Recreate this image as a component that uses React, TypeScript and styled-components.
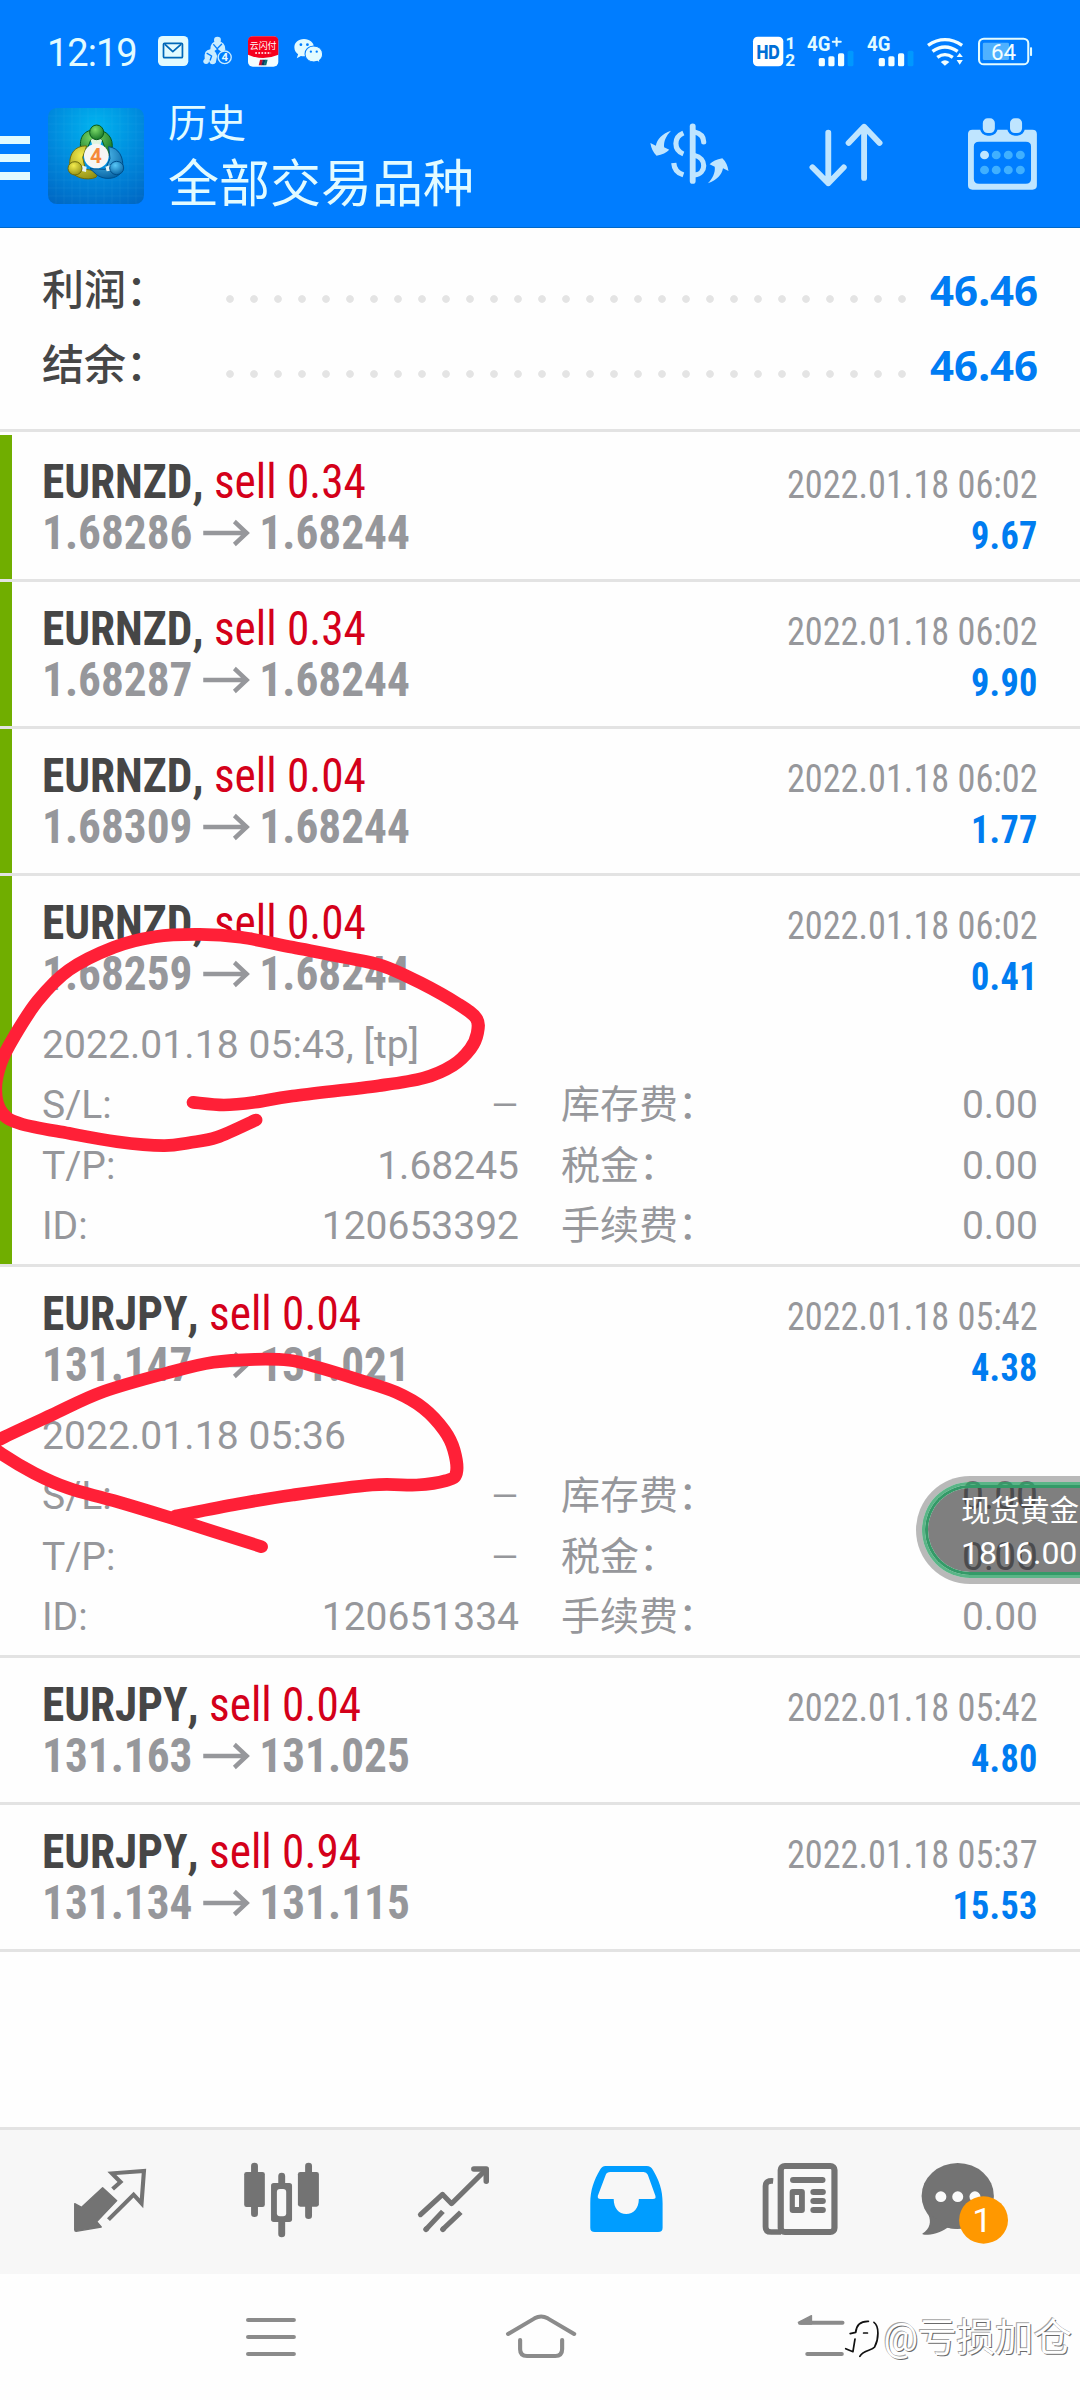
import React from 'react';
import styled, { createGlobalStyle } from 'styled-components';

const GlobalStyle = createGlobalStyle`
  html, body { margin: 0; padding: 0; background: #fefefe; }
  *, *::before, *::after { box-sizing: border-box; }
  svg { display: block; flex: none; overflow: visible; }
`;

const SANS = `Roboto, "Noto Sans CJK SC", sans-serif`;
const COND = `"Roboto Condensed", Roboto, "Noto Sans CJK SC", sans-serif`;
const BLUE = '#007dff';
const ICE = '#e2fbff';
const PALE = '#bfe5ff';
const GREY = '#96979b';
const DARK = '#737373';
const RULE = '#e3e3e3';

/* ---------- drawing helper: artwork units are about a third of a pixel ---------- */
type BoxProps = { box: [number, number, number, number]; children: React.ReactNode };
const Art = ({ box, children }: BoxProps) => (
  <svg
    viewBox={box.join(' ')}
    width={box[2] / 2.9037}
    height={box[3] / 3}
    preserveAspectRatio="none"
    fill="none"
    strokeLinecap="round"
    strokeLinejoin="round"
  >
    {children}
  </svg>
);

/* ---------- page ---------- */
const Screen = styled.main`
  position: relative;
  display: flex;
  flex-direction: column;
  width: 1080px;
  height: 2400px;
  overflow: hidden;
  background: #fefefe;
  font-family: ${SANS};
`;

/* ---------- header ---------- */
const Header = styled.header`
  height: 228px;
  background: ${BLUE};
  color: ${ICE};
  border-bottom: 1px solid #0068c8;
`;
const StatusBar = styled.div`
  display: flex;
  align-items: center;
  justify-content: space-between;
  height: 102px;
  padding: 0 48px 0 47px;
`;
const StatusGroup = styled.div<{ $gap: number }>`
  display: flex;
  align-items: center;
  gap: ${(p) => p.$gap}px;
`;
const Clock = styled.span`
  width: 95px;
  margin-top: 4px;
  font-size: 38px;
  line-height: 44px;
  letter-spacing: -1px;
`;
const Toolbar = styled.div`
  display: flex;
  align-items: flex-start;
`;
const MenuButton = styled.div`
  display: flex;
  flex-direction: column;
  gap: 10px;
  width: 30px;
  margin: 34px 18px 0 0;
`;
const MenuBar = styled.span`
  height: 8px;
  background: ${ICE};
`;
const LogoBox = styled.div`
  margin: 6px 24px 0 0;
`;
const Titles = styled.div`
  flex: 1;
  font-weight: 400;
`;
const Kicker = styled.div`
  font-size: 39px;
  line-height: 44px;
`;
const Title = styled.div`
  margin-top: 7px;
  font-size: 51px;
  line-height: 64px;
`;
const Actions = styled.div`
  display: flex;
  gap: 80px;
  margin: 16px 43px 0 0;
`;
const CalendarSlot = styled.div`
  margin-left: 5px;
`;

/* ---------- summary ---------- */
const Summary = styled.section`
  height: 204px;
  padding: 25px 42px 0;
  border-bottom: 3px solid ${RULE};
`;
const SummaryRow = styled.div`
  display: flex;
  align-items: center;
  height: 75px;
  font-size: 42px;
  line-height: 75px;
`;
const SummaryLabel = styled.span`
  width: 176px;
  font-weight: 500;
  color: #464646;
`;
const Dots = styled.span`
  flex: none;
  width: 696px;
  height: 12px;
  margin-top: 17px;
  background: radial-gradient(circle at 12px 6px, #e4e4e4 3.4px, transparent 4.2px) 0 0 / 24px 12px;
`;
const SummaryValue = styled.span`
  flex: 1;
  padding-bottom: 2px;
  line-height: 73px;
  text-align: right;
  font-family: "Noto Sans", sans-serif;
  font-weight: 700;
  color: #007cf3;
`;

/* ---------- deals ---------- */
const DealList = styled.section`
  flex: 1;
  padding-top: 3px;
`;
const Deal = styled.article<{ $marked: boolean; $open: boolean }>`
  height: ${(p) => (p.$open ? 391 : 147)}px;
  padding: 21px 42px 0;
  box-shadow: inset 12px 0 ${(p) => (p.$marked ? '#70ae00' : 'transparent')};
  border-bottom: 3px solid ${RULE};
`;
const DealHead = styled.div`
  display: flex;
  justify-content: space-between;
  font-family: ${COND};
  line-height: 51px;
  white-space: nowrap;
  font-kerning: none;
`;
const DealLeft = styled.div`
  font-size: 48px;
  transform: scaleX(0.943);
  transform-origin: left;
`;
const DealRight = styled.div`
  padding-top: 4px;
  font-size: 39px;
  text-align: right;
  transform: scaleX(0.93);
  transform-origin: right;
`;
const Symbol = styled.div`
  font-weight: 700;
  color: #464646;
`;
const Side = styled.span`
  font-weight: 400;
  color: #d4001a;
`;
const Prices = styled.div`
  display: flex;
  align-items: center;
  gap: 11px;
  font-weight: 700;
  color: ${GREY};
`;
const ClosedAt = styled.div`
  color: ${GREY};
`;
const Profit = styled.div`
  font-weight: 700;
  letter-spacing: 0.3px;
  color: #007cf0;
`;
const Details = styled.div`
  padding-top: 11.5px;
  font-size: 39px;
  line-height: 60.67px;
  color: ${GREY};
`;
const Opened = styled.div`
  letter-spacing: 0.08px;
`;
const DetailGrid = styled.div`
  display: grid;
  grid-template-columns: 1fr 1fr;
  column-gap: 42px;
`;
const Field = styled.div`
  display: flex;
  justify-content: space-between;
  height: 60.67px;
`;
const Dash = styled.span`
  padding-right: 1px;
  font-size: 34px;
`;

/* ---------- bottom bars ---------- */
const TabBar = styled.nav`
  display: flex;
  height: 147px;
  padding: 0 24px;
  background: #f7f7f7;
  border-top: 3px solid ${RULE};
`;
const SystemBar = styled.footer`
  display: flex;
  align-items: flex-start;
  height: 126px;
  padding: 38px 0 0 246px;
  background: #fefefe;
`;
const HomeSlot = styled.div`
  margin: 0 221px 0 210px;
`;

/* ---------- overlays ---------- */
const Marker = styled.div<{ $top: number }>`
  position: absolute;
  top: ${(p) => p.$top}px;
  left: 0;
`;
const Ticker = styled.aside`
  position: absolute;
  top: 1476px;
  left: 916px;
  width: 164px;
  height: 108px;
  border: 6px solid rgba(0, 0, 0, 0.27);
  border-right: 0;
  border-radius: 54px 0 0 54px;
`;
const TickerRing = styled.div`
  height: 96px;
  border: 3px solid rgba(20, 150, 85, 0.7);
  border-right: 0;
  border-radius: 48px 0 0 48px;
`;
const TickerBody = styled.div`
  height: 90px;
  padding: 4px 0 0 33px;
  border: 3px solid #349a68;
  border-right: 0;
  border-radius: 45px 0 0 45px;
  background: rgba(0, 0, 0, 0.5);
  background-clip: padding-box;
  color: #fff;
  white-space: nowrap;
`;
const TickerName = styled.div`
  font-size: 29.5px;
  line-height: 38px;
`;
const TickerPrice = styled.div`
  font-size: 32px;
  line-height: 47px;
`;
const Watermark = styled.div`
  position: absolute;
  right: 8px;
  top: 2312px;
  display: flex;
  align-items: center;
  gap: 3px;
  font-size: 38.5px;
  line-height: 52px;
  color: #fff;
  text-shadow: 1px 1px 0 #6a6a6a, -1px -1px 0 #a4a4a4;
`;

/* ---------- status icons ---------- */
const MailIcon = () => (
  <Art box={[459, 108, 88, 90]}>
    <rect x="459" y="108" width="88" height="90" rx="14" fill={ICE} />
    <rect x="475" y="130" width="55" height="43" rx="3" stroke="#0068b8" strokeWidth="5" />
    <path d="M480 134 L502 155 L525 134" stroke="#0068b8" strokeWidth="5" />
  </Art>
);
const MetaIcon = () => (
  <Art box={[591, 108, 84, 88]}>
    <g fill="#c9ecff">
      <circle cx="633" cy="120" r="10" />
      <path d="M612 150 Q612 124 633 124 Q656 124 656 150 L645 156 L633 146 L620 156Z" />
      <path d="M596 178 Q592 150 612 148 Q628 150 632 168 L628 188 L606 184Z" />
      <circle cx="600" cy="184" r="8" />
      <circle cx="619" cy="184" r="9" />
    </g>
    <path d="M622 134 L632 146 L645 133 M603 160 L616 168 L612 180" stroke={BLUE} strokeWidth="4" />
    <circle cx="654" cy="172" r="19" fill={BLUE} stroke="#c9ecff" strokeWidth="4" />
    <text x="654" y="184" textAnchor="middle" fontFamily={SANS} fontWeight="700" fontSize="33" fill="#e8faff">4</text>
  </Art>
);
const PayIcon = () => (
  <Art box={[720, 106, 88, 92]}>
    <rect x="720" y="107" width="88" height="91" rx="14" fill="#f4feff" />
    <path d="M720 121 Q720 107 734 107 H794 Q808 107 808 121 V162 Q764 182 720 162Z" fill="#f5001d" />
    <text x="764" y="146" textAnchor="middle" fontFamily={SANS} fontSize="26" fill="#fff">云闪付</text>
    <path d="M741 157 H787" stroke="#ffc9cf" strokeWidth="6" strokeDasharray="5 4" strokeLinecap="butt" />
    <path d="M755 177 H764 L760 194 H751Z" fill="#c8102e" />
    <path d="M763 177 H771 L767 194 H759Z" fill="#12355f" />
    <path d="M770 177 H777 L773 194 H766Z" fill="#0a6f72" />
  </Art>
);
const WeChatIcon = () => (
  <Art box={[853, 114, 84, 76]}>
    <path d="M882 117 C865 117 854 128 854 142 C854 152 859 158 865 163 L861 175 L873 168 Q884 170 892 167 C905 165 911 153 911 142 C911 128 899 117 882 117Z" fill={ICE} />
    <path d="M910 138 C895 138 885 149 885 162 C885 176 896 186 911 186 L921 184 L929 189 L927 181 C933 177 936 170 936 162 C936 148 925 138 910 138Z" fill={ICE} stroke={BLUE} strokeWidth="3" />
    <g fill={BLUE}>
      <circle cx="873" cy="134" r="4" />
      <circle cx="892" cy="134" r="4" />
      <circle cx="902" cy="155" r="3.4" />
      <circle cx="919" cy="155" r="3.4" />
    </g>
  </Art>
);
const HdIcon = () => (
  <Art box={[618, 106, 120, 92]}>
    <rect x="618" y="108" width="88" height="89" rx="14" fill="#fff" />
    <text x="662" y="174" textAnchor="middle" textLength="68" lengthAdjust="spacingAndGlyphs" fontFamily="Inter, sans-serif" fontWeight="800" fontSize="56" fill="#006fd6">HD</text>
    <text x="727" y="144" textAnchor="middle" fontFamily={SANS} fontWeight="700" fontSize="50" fill={ICE}>1</text>
    <text x="726" y="196" textAnchor="middle" fontFamily={SANS} fontWeight="700" fontSize="50" fill={ICE}>2</text>
  </Art>
);
const SignalIcon = ({ plus }: { plus?: boolean }) => (
  <Art box={[776, 106, 136, 92]}>
    <text x="776" y="152" textLength="68" lengthAdjust="spacingAndGlyphs" fontFamily={SANS} fontWeight="700" fontSize="58" fill={ICE}>4G</text>
    {plus && <path d="M851 123 H874 M862 112 V135" stroke={ICE} strokeWidth="6" />}
    <rect x="810" y="172" width="18" height="25" rx="5" fill="#f2feff" />
    <rect x="838" y="167" width="18" height="30" rx="5" fill="#f2feff" />
    <rect x="866" y="158" width="18" height="39" rx="5" fill="#f2feff" />
    <rect x="894" y="150" width="17" height="47" rx="5" fill="#0098ff" />
  </Art>
);
const WifiIcon = () => (
  <Art box={[1124, 108, 110, 90]}>
    <g stroke="#f2feff" strokeWidth="10" strokeLinecap="butt">
      <path d="M1127 136 Q1176 102 1226 136" />
      <path d="M1140 154 Q1176 128 1213 154" />
      <path d="M1154 172 Q1176 156 1199 172" />
    </g>
    <path d="M1164 186 Q1176 176 1189 186 L1176 197Z" fill="#f2feff" />
    <path d="M1210 171 L1219 159 L1228 171Z M1210 180 L1219 194 L1228 180Z" fill="#f2feff" />
  </Art>
);
const BatteryIcon = () => (
  <Art box={[1272, 114, 157, 86]}>
    <rect x="1275" y="119" width="143" height="77" rx="14" stroke={ICE} strokeWidth="6" />
    <rect x="1286" y="131" width="76" height="52" rx="4" fill="#4fb1ff" />
    <rect x="1423" y="145" width="6" height="26" rx="2" fill={ICE} />
    <text x="1346" y="183" textAnchor="middle" fontFamily={SANS} fontSize="65" fill="#f4feff">64</text>
  </Art>
);

/* ---------- header icons ---------- */
const Logo = () => (
  <svg width="96" height="96" viewBox="24 24 288 288">
    <defs>
      <radialGradient id="sky" cx="0.5" cy="0.2" r="0.9">
        <stop offset="0" stopColor="#00b4f0" />
        <stop offset="0.55" stopColor="#0088dc" />
        <stop offset="1" stopColor="#0068c4" />
      </radialGradient>
      <radialGradient id="green" cx="0.4" cy="0.3" r="0.8">
        <stop offset="0" stopColor="#7ddc6a" />
        <stop offset="1" stopColor="#0b6b20" />
      </radialGradient>
      <radialGradient id="yellow" cx="0.4" cy="0.3" r="0.8">
        <stop offset="0" stopColor="#f3ec4e" />
        <stop offset="1" stopColor="#8c8a10" />
      </radialGradient>
      <radialGradient id="azure" cx="0.4" cy="0.3" r="0.8">
        <stop offset="0" stopColor="#58c8f8" />
        <stop offset="1" stopColor="#005a9c" />
      </radialGradient>
    </defs>
    <rect x="24" y="24" width="288" height="288" rx="26" fill="url(#sky)" />
    <path
      d="M48 24V312M72 24V312M96 24V312M120 24V312M144 24V312M168 24V312M192 24V312M216 24V312M240 24V312M264 24V312M288 24V312M24 48H312M24 72H312M24 96H312M24 120H312M24 144H312M24 168H312M24 192H312M24 216H312M24 240H312M24 264H312M24 288H312"
      stroke="#7fd4ff"
      strokeOpacity="0.1"
      strokeWidth="2"
    />
    <g strokeWidth="3">
      <path d="M122 146 C116 102 142 88 168 90 C200 90 222 112 216 150 L204 168 L186 120 H152 L134 168Z" fill="url(#green)" stroke="#075a1c" />
      <path d="M140 138 C104 136 84 164 90 206 C96 232 140 244 168 232 L178 214 L136 208 L128 172Z" fill="url(#yellow)" stroke="#6d6c0c" />
      <path d="M206 140 C236 144 252 170 248 208 C240 236 196 244 170 224 L150 206 L196 208 L210 176Z" fill="url(#azure)" stroke="#00508c" />
      <path d="M152 120 L168 112 L186 120 L180 140 H158Z" fill="#dff5e0" />
      <path d="M122 196 L140 200 L138 216 L122 212Z M196 200 L214 194 L212 212 L200 214Z" fill="#e4f3f4" />
      <ellipse cx="170" cy="97" rx="21" ry="22" fill="url(#green)" stroke="#075a1c" />
      <ellipse cx="105" cy="205" rx="21" ry="20" fill="url(#yellow)" stroke="#6d6c0c" />
      <ellipse cx="230" cy="204" rx="21" ry="20" fill="url(#azure)" stroke="#00508c" />
    </g>
    <circle cx="169" cy="168" r="37" fill="#f6f6f4" />
    <text x="168" y="190" textAnchor="middle" fontFamily={SANS} fontWeight="700" fontSize="62" fill="#f5893a">4</text>
  </svg>
);
const SWAP_HEAD = 'M382 393 C355 403 342 418 338 438 L322 430 Q326 455 340 468 Q365 463 377 450 L362 443 C360 425 368 408 382 393Z';
const CurrencyIcon = () => (
  <Art box={[321, 355, 229, 217]}>
    <g stroke={PALE} strokeWidth="15">
      <path d="M445 380 V544" strokeWidth="17" />
      <path d="M450 397 C468 401 477 412 477 427" />
      <path d="M450 467 C486 475 486 522 450 526" />
      <g strokeLinecap="butt">
        <path d="M418 400 C389 412 389 452 418 463" />
        <path d="M390 490 C391 508 400 520 418 526" />
      </g>
    </g>
    <path d={SWAP_HEAD} fill={PALE} />
    <path d={SWAP_HEAD} fill={PALE} transform="rotate(180 435.5 472)" />
  </Art>
);
const SortIcon = () => (
  <Art box={[781, 355, 215, 217]}>
    <path d="M837 399 V551 M791 503 L837 551 L882 503 M941 535 V382 M896 430 L941 381 L986 430" stroke={PALE} strokeWidth="17" />
  </Art>
);
const CalendarIcon = () => (
  <Art box={[1243, 355, 200, 217]}>
    <path
      fillRule="evenodd"
      fill={PALE}
      d="M1256 390 H1430 Q1443 390 1443 403 V557 Q1443 570 1430 570 H1256 Q1243 570 1243 557 V403 Q1243 390 1256 390Z M1275 426 Q1260 426 1260 440 V538 Q1260 552 1275 552 H1411 Q1426 552 1426 538 V440 Q1426 426 1411 426Z"
    />
    <rect x="1282" y="352" width="43" height="52" rx="18" fill={PALE} stroke={BLUE} strokeWidth="8" />
    <rect x="1361" y="352" width="43" height="52" rx="18" fill={PALE} stroke={BLUE} strokeWidth="8" />
    {[466, 511].map((y) =>
      [1291, 1325, 1360, 1395].map((x) => (
        <circle key={`${x}-${y}`} cx={x} cy={y} r="13" fill={x === 1291 && y === 466 ? PALE : '#40b0ff'} />
      )),
    )}
  </Art>
);

/* ---------- tab icons, each filling its own cell ---------- */
const CELL = 499.4;
const QuotesTab = () => (
  <Art box={[69.7, 60, CELL, 431]}>
    <path d="M217 281 L237 292 L298 233 L339 272 L281 335 L294 351 L221 364 Q217 364 217 359Z" fill={DARK} stroke={DARK} strokeWidth="4" />
    <path d="M327 237 L350 216 L325 190 L418 183 L411 280 L388 254 L315 329" stroke={DARK} strokeWidth="12" strokeLinejoin="miter" strokeLinecap="butt" />
  </Art>
);
const ChartTab = () => (
  <Art box={[569.1, 60, CELL, 431]}>
    <path d="M739 168 V311 M896 168 V317 M818 198 V225 M818 330 V372" stroke={DARK} strokeWidth="20" />
    <rect x="709" y="186" width="60" height="105" rx="7" fill={DARK} />
    <rect x="865" y="186" width="61" height="104" rx="7" fill={DARK} />
    <rect x="787" y="219" width="61" height="117" rx="8" fill={DARK} />
    <rect x="804" y="237" width="27" height="82" rx="9" fill="#f7f7f7" />
  </Art>
);
const TradeTab = () => (
  <Art box={[1068.6, 60, CELL, 431]}>
    <g stroke={DARK} strokeWidth="15">
      <path d="M1221 314 L1285 253 L1311 281 L1410 180" />
      <path d="M1376 177 H1412 V214" strokeWidth="16" />
      <path d="M1237 358 L1286 304 M1286 358 L1338 307" strokeLinecap="butt" />
      <path d="M1237 358 L1238 357 M1286 358 L1287 357" strokeWidth="16" />
    </g>
  </Art>
);
const HistoryTab = () => (
  <Art box={[0, 60, CELL, 431]}>
    <path
      fill="#009dff"
      fillRule="evenodd"
      d="M190 168 H310 Q322 168 328 180 C345 210 356 238 356 280 V353 Q356 366 343 366 H159 Q146 366 146 353 V280 C146 240 157 210 174 180 Q180 168 190 168Z M204 186 Q194 186 191 194 L168 257 Q166 267 176 267 H214 C214 294 229 312 250 312 C272 312 287 294 287 267 H328 Q338 267 335 257 L313 194 Q309 186 301 186Z"
    />
  </Art>
);
const NewsTab = () => (
  <Art box={[CELL, 60, CELL, 431]}>
    <path d="M677 213 Q655 211 655 228 V350 Q655 366 671 366 H700" stroke={DARK} strokeWidth="17" strokeLinecap="butt" />
    <rect x="699" y="168" width="156" height="198" rx="12" stroke={DARK} strokeWidth="18" fill="#f9f9f9" />
    <path d="M735 210 H820 M794 246 H821 M794 273 H821 M794 300 H821" stroke={DARK} strokeWidth="18" />
    <rect x="725" y="237" width="44" height="72" rx="9" fill={DARK} />
    <rect x="740" y="255" width="12" height="36" fill="#f9f9f9" />
  </Art>
);
const ChatTab = () => (
  <Art box={[998.9, 60, CELL, 431]}>
    <ellipse cx="1213" cy="258" rx="105" ry="99" fill={DARK} />
    <path d="M1128 314 C1136 335 1134 355 1110 371 C1112 378 1155 374 1183 353 L1215 357Z" fill={DARK} />
    {[1164, 1213, 1263].map((x) => (
      <circle key={x} cx={x} cy="260" r="16" fill="#fafafa" />
    ))}
    <circle cx="1288" cy="330" r="71" fill="#ff9800" />
    <text x="1284" y="366" textAnchor="middle" fontFamily={SANS} fontSize="102" fill="#fff">1</text>
  </Art>
);

/* ---------- system navigation icons ---------- */
const NAV = '#8b8b8b';
const RecentsIcon = () => (
  <Art box={[714, 606, 145, 144]}>
    <path d="M720 630 H853 M720 681 H853 M720 732 H853" stroke={NAV} strokeWidth="12" />
  </Art>
);
const HomeIcon = () => (
  <Art box={[1469, 606, 204, 144]}>
    <path d="M1475 672 L1552 625 Q1571 614 1590 625 L1667 672 M1510 690 V718 Q1510 738 1530 738 H1612 Q1632 738 1632 718 V690" stroke={NAV} strokeWidth="12" />
  </Art>
);
const BackIcon = () => (
  <Art box={[748, 606, 150, 144]}>
    <path d="M760 638 H880 M778 732 H878" stroke={NAV} strokeWidth="12" />
    <path d="M752 637 L790 617 V642 H754Z" fill={NAV} stroke={NAV} strokeWidth="4" />
  </Art>
);
const WatermarkIcon = () => (
  <Art box={[875, 640, 105, 125]}>
    <path d="M888 728 L900 740 L904 712 L910 690 L897 688 L910 684 C914 664 924 656 944 658" stroke="#fff" strokeWidth="16" />
    <path d="M880 735 L901 744 L907 706 M893 690 L909 686 C911 664 924 652 946 653 M932 688 H943" stroke="#111" strokeWidth="5" />
    <path d="M962 656 C978 668 976 706 964 730 C955 742 932 738 921 758" stroke="#111" strokeWidth="5" />
  </Art>
);

/* ---------- hand-drawn marker strokes ---------- */
type Pt = [number, number];
const smooth = (p: Pt[]) =>
  p.slice(1).reduce((d, cur, i) => {
    const a = p[Math.max(i - 1, 0)];
    const b = p[i];
    const n = p[Math.min(i + 2, p.length - 1)];
    const c1 = [b[0] + (cur[0] - a[0]) / 6, b[1] + (cur[1] - a[1]) / 6];
    const c2 = [cur[0] - (n[0] - b[0]) / 6, cur[1] - (n[1] - b[1]) / 6];
    return `${d} C${c1.join(' ')} ${c2.join(' ')} ${cur.join(' ')}`;
  }, `M${p[0].join(' ')}`);

const UPPER: Pt[] = [
  [743, 780], [630, 832], [550, 848], [475, 857], [340, 845], [200, 820], [60, 791], [5, 757], [-13, 690], [2, 610], [40, 532],
  [110, 422], [200, 330], [330, 262], [450, 230], [580, 223], [700, 232], [850, 262], [1000, 292], [1110, 317], [1220, 368],
  [1330, 432], [1383, 475], [1386, 520], [1366, 566], [1315, 616], [1230, 654], [1100, 677], [850, 708], [740, 727], [650, 735], [561, 727],
];
const LOWER: Pt[] = [
  [759, 860], [500, 775], [330, 722], [200, 685], [100, 640], [5, 582], [-22, 556], [5, 535], [150, 465], [300, 395], [500, 335],
  [620, 307], [740, 298], [840, 301], [920, 321], [1050, 362], [1150, 397], [1230, 445], [1290, 511], [1318, 570], [1325, 640],
  [1295, 662], [1210, 675], [1080, 675], [850, 705], [690, 732], [510, 768],
];
const Stroke = ({ top, points }: { top: number; points: Pt[] }) => (
  <Marker $top={top}>
    <Art box={[0, 0, 1568, 900]}>
      <path d={smooth(points)} stroke="#ff2037" strokeWidth="38" />
    </Art>
  </Marker>
);

/* ---------- data ---------- */
type DealData = {
  symbol: string;
  side: string;
  from: string;
  to: string;
  time: string;
  profit: string;
  marked?: boolean;
  opened?: string;
  fields?: [string, string][];
};
const deals: DealData[] = [
  { symbol: 'EURNZD', side: 'sell 0.34', from: '1.68286', to: '1.68244', time: '2022.01.18 06:02', profit: '9.67', marked: true },
  { symbol: 'EURNZD', side: 'sell 0.34', from: '1.68287', to: '1.68244', time: '2022.01.18 06:02', profit: '9.90', marked: true },
  { symbol: 'EURNZD', side: 'sell 0.04', from: '1.68309', to: '1.68244', time: '2022.01.18 06:02', profit: '1.77', marked: true },
  {
    symbol: 'EURNZD', side: 'sell 0.04', from: '1.68259', to: '1.68244', time: '2022.01.18 06:02', profit: '0.41', marked: true,
    opened: '2022.01.18 05:43, [tp]',
    fields: [['S/L:', '—'], ['库存费：', '0.00'], ['T/P:', '1.68245'], ['税金：', '0.00'], ['ID:', '120653392'], ['手续费：', '0.00']],
  },
  {
    symbol: 'EURJPY', side: 'sell 0.04', from: '131.147', to: '131.021', time: '2022.01.18 05:42', profit: '4.38',
    opened: '2022.01.18 05:36',
    fields: [['S/L:', '—'], ['库存费：', '0.00'], ['T/P:', '—'], ['税金：', '0.00'], ['ID:', '120651334'], ['手续费：', '0.00']],
  },
  { symbol: 'EURJPY', side: 'sell 0.04', from: '131.163', to: '131.025', time: '2022.01.18 05:42', profit: '4.80' },
  { symbol: 'EURJPY', side: 'sell 0.94', from: '131.134', to: '131.115', time: '2022.01.18 05:37', profit: '15.53' },
];

const PriceArrow = () => (
  <svg width="49" height="28" viewBox="0 0 49 28" fill="none" stroke={GREY} strokeWidth="4.6">
    <path d="M0 14 H46 M33 2.5 L46 14 L33 25.5" />
  </svg>
);

const DealRow = ({ deal }: { deal: DealData }) => (
  <Deal $marked={!!deal.marked} $open={!!deal.fields}>
    <DealHead>
      <DealLeft>
        <Symbol>
          {deal.symbol}, <Side>{deal.side}</Side>
        </Symbol>
        <Prices>
          <span>{deal.from}</span>
          <PriceArrow />
          <span>{deal.to}</span>
        </Prices>
      </DealLeft>
      <DealRight>
        <ClosedAt>{deal.time}</ClosedAt>
        <Profit>{deal.profit}</Profit>
      </DealRight>
    </DealHead>
    {deal.fields && (
      <Details>
        <Opened>{deal.opened}</Opened>
        <DetailGrid>
          {deal.fields.map(([label, value]) => (
            <Field key={label}>
              <span>{label}</span>
              {value === '—' ? <Dash>{value}</Dash> : <span>{value}</span>}
            </Field>
          ))}
        </DetailGrid>
      </Details>
    )}
  </Deal>
);

export default function App() {
  return (
    <Screen>
      <GlobalStyle />
      <Header>
        <StatusBar>
          <StatusGroup $gap={15.5}>
            <Clock>12:19</Clock>
            <MailIcon />
            <MetaIcon />
            <PayIcon />
            <WeChatIcon />
          </StatusGroup>
          <StatusGroup $gap={13}>
            <HdIcon />
            <SignalIcon plus />
            <SignalIcon />
            <WifiIcon />
            <BatteryIcon />
          </StatusGroup>
        </StatusBar>
        <Toolbar>
          <MenuButton>
            <MenuBar />
            <MenuBar />
            <MenuBar />
          </MenuButton>
          <LogoBox>
            <Logo />
          </LogoBox>
          <Titles>
            <Kicker>历史</Kicker>
            <Title>全部交易品种</Title>
          </Titles>
          <Actions>
            <CurrencyIcon />
            <SortIcon />
            <CalendarSlot>
              <CalendarIcon />
            </CalendarSlot>
          </Actions>
        </Toolbar>
      </Header>
      <Summary>
        {['利润：', '结余：'].map((label) => (
          <SummaryRow key={label}>
            <SummaryLabel>{label}</SummaryLabel>
            <Dots />
            <SummaryValue>46.46</SummaryValue>
          </SummaryRow>
        ))}
      </Summary>
      <DealList>
        {deals.map((deal, i) => (
          <DealRow key={i} deal={deal} />
        ))}
      </DealList>
      <TabBar>
        <QuotesTab />
        <ChartTab />
        <TradeTab />
        <HistoryTab />
        <NewsTab />
        <ChatTab />
      </TabBar>
      <SystemBar>
        <RecentsIcon />
        <HomeSlot>
          <HomeIcon />
        </HomeSlot>
        <BackIcon />
      </SystemBar>
      <Stroke top={860} points={UPPER} />
      <Stroke top={1260} points={LOWER} />
      <Ticker>
        <TickerRing>
          <TickerBody>
            <TickerName>现货黄金</TickerName>
            <TickerPrice>1816.00</TickerPrice>
          </TickerBody>
        </TickerRing>
      </Ticker>
      <Watermark>
        <WatermarkIcon />
        <span>@亏损加仓</span>
      </Watermark>
    </Screen>
  );
}
